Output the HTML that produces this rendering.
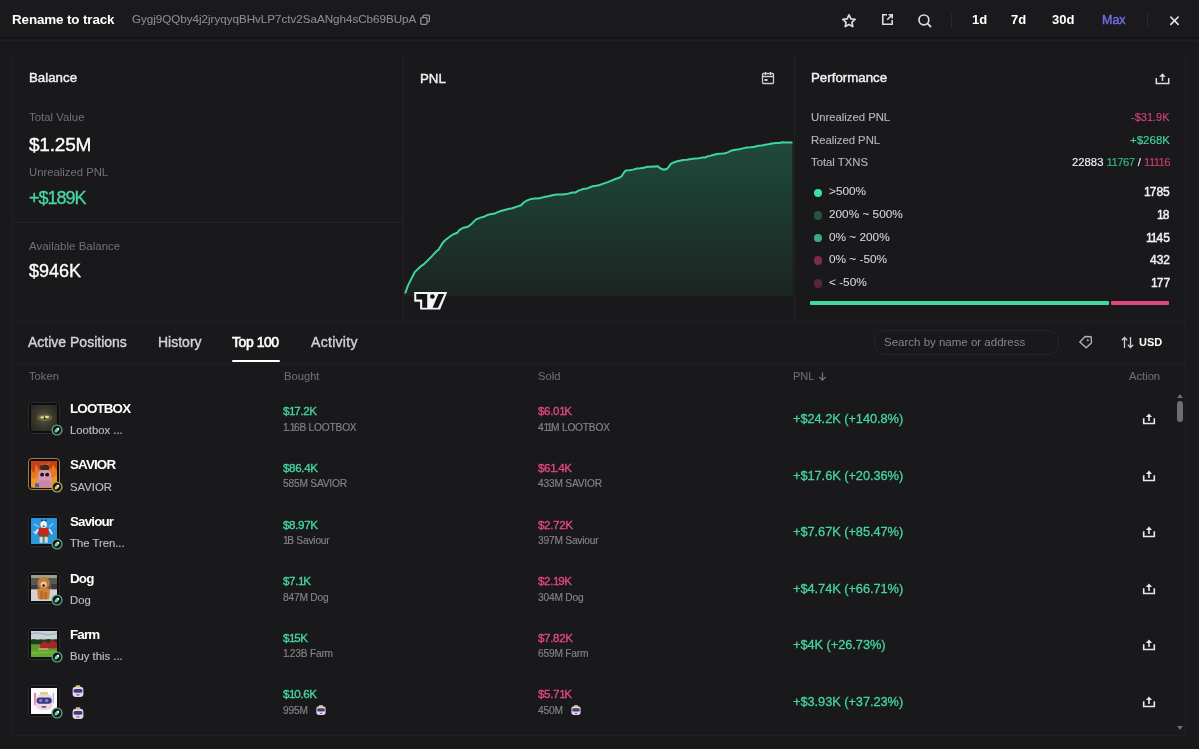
<!DOCTYPE html>
<html><head><meta charset="utf-8">
<style>
*{margin:0;padding:0;box-sizing:border-box}
html,body{width:1199px;height:749px;overflow:hidden;background:#19191b;font-family:"Liberation Sans",sans-serif;color:#fff}
.a{position:absolute}
.t{position:absolute;line-height:1;white-space:nowrap;will-change:transform}
</style></head><body>
<div class="a" style="left:0px;top:0px;width:1199px;height:37px;background:#1a1a1c"></div>
<div class="a" style="left:0px;top:37px;width:1199px;height:2px;background:#141416"></div>
<div class="a" style="left:0px;top:40px;width:1199px;height:1px;background:#1f1f22"></div>
<div id="h_title" class="t" style="left:12.3px;top:12.86px;font-size:13.4px;color:#fff;font-weight:bold;letter-spacing:-0.12px;">Rename to track</div>
<div id="h_addr" class="t" style="left:132px;top:13.28px;font-size:11.6px;color:#8b8b90;font-weight:normal;-webkit-text-stroke:0.1px #8b8b90;">Gygj9QQby4j2jryqyqBHvLP7ctv2SaANgh4sCb69BUpA</div>
<svg class="a" style="left:419px;top:13px" width="12" height="13" viewBox="0 0 12 13"><rect x="4.2" y="2.2" width="6.2" height="6.6" rx="1.3" fill="none" stroke="#909095" stroke-width="1.3"/><rect x="1.8" y="4.6" width="6.2" height="6.8" rx="1.3" fill="#19191b" stroke="#909095" stroke-width="1.3"/></svg>
<svg class="a" style="left:841px;top:12.6px" width="16" height="16" viewBox="0 0 16 16"><path d="M8 1.9l1.85 3.95 4.25.55-3.15 2.9.85 4.25L8 11.45l-3.8 2.15.85-4.25L1.9 6.4l4.25-.55z" fill="none" stroke="#dcdce0" stroke-width="1.7" stroke-linejoin="round"/></svg>
<svg class="a" style="left:881px;top:13px" width="13" height="13" viewBox="0 0 13 13"><path d="M6 1.8H1.8v9.4h9.4V7" fill="none" stroke="#dcdce0" stroke-width="1.6"/><path d="M7.6 1.8h3.6v3.6M11.2 1.8L6.2 6.8" fill="none" stroke="#dcdce0" stroke-width="1.6"/></svg>
<svg class="a" style="left:917px;top:13px" width="16" height="16" viewBox="0 0 16 16"><circle cx="6.9" cy="6.9" r="4.9" fill="none" stroke="#dcdce0" stroke-width="1.7"/><path d="M10.6 10.6l3 3" stroke="#dcdce0" stroke-width="1.8" stroke-linecap="round"/></svg>
<div class="a" style="left:951px;top:14px;width:1px;height:14px;background:#2a2a2d"></div>
<div class="t" style="left:972px;top:12.50px;font-size:13px;color:#fff;font-weight:bold;">1d</div>
<div class="t" style="left:1011px;top:12.50px;font-size:13px;color:#fff;font-weight:bold;">7d</div>
<div class="t" style="left:1052px;top:12.50px;font-size:13px;color:#fff;font-weight:bold;">30d</div>
<div class="t" style="left:1102.3px;top:14.22px;font-size:12.5px;color:#6e6ee6;font-weight:normal;-webkit-text-stroke:0.45px #6e6ee6;">Max</div>
<div class="a" style="left:1147px;top:13px;width:1px;height:15px;background:#2a2a2d"></div>
<svg class="a" style="left:1169px;top:15px" width="11" height="11" viewBox="0 0 11 11"><path d="M1.8 2l7.4 7.4M9.2 2L1.8 9.4" stroke="#e6e6e9" stroke-width="1.6" stroke-linecap="round"/></svg>
<div class="a" style="left:12px;top:54px;width:1174px;height:268px;border:1px solid #202023;border-top-color:#1c1c1e"></div>
<div class="a" style="left:403px;top:55px;width:1px;height:266px;background:#232326"></div>
<div class="a" style="left:794px;top:55px;width:1px;height:266px;background:#232326"></div>
<div class="a" style="left:13px;top:222px;width:390px;height:1px;background:#232326"></div>
<div id="bal" class="t" style="left:29px;top:71.24px;font-size:13.3px;color:#f2f2f4;font-weight:normal;-webkit-text-stroke:0.4px #f2f2f4;">Balance</div>
<div class="t" style="left:29px;top:112.35px;font-size:11.4px;color:#717176;font-weight:normal;">Total Value</div>
<div id="tv" class="t" style="left:28.5px;top:134.92px;font-size:19px;color:#fff;font-weight:normal;-webkit-text-stroke:0.35px #fff;letter-spacing:-0.2px;">$1.25M</div>
<div class="t" style="left:29px;top:166.93px;font-size:11.3px;color:#717176;font-weight:normal;">Unrealized PNL</div>
<div class="t" style="left:28.5px;top:188.76px;font-size:18px;color:#45d5a0;font-weight:normal;-webkit-text-stroke:0.35px #45d5a0;letter-spacing:-1.0px;">+$189K</div>
<div class="t" style="left:29px;top:240.77px;font-size:11.5px;color:#717176;font-weight:normal;">Available Balance</div>
<div class="t" style="left:29px;top:262.26px;font-size:18px;color:#fff;font-weight:normal;-webkit-text-stroke:0.35px #fff;">$946K</div>
<div class="t" style="left:420px;top:71.74px;font-size:13.3px;color:#f2f2f4;font-weight:normal;-webkit-text-stroke:0.4px #f2f2f4;">PNL</div>
<svg class="a" style="left:761px;top:71px" width="14" height="14" viewBox="0 0 14 14"><rect x="1.5" y="2.5" width="11" height="10" rx="1" fill="none" stroke="#cfcfd3" stroke-width="1.3"/><path d="M1.5 5.5h11M4.5 1v3M9.5 1v3" stroke="#cfcfd3" stroke-width="1.3"/><rect x="3.5" y="8" width="3" height="2" fill="#cfcfd3"/></svg>
<svg class="a" style="left:0;top:0" width="1199" height="749" viewBox="0 0 1199 749">
<defs><linearGradient id="gf" x1="0" y1="142" x2="0" y2="296" gradientUnits="userSpaceOnUse"><stop offset="0" stop-color="#1f4a3b"/><stop offset="1" stop-color="#1b2521"/></linearGradient></defs>
<path d="M404,296 L405.1,293.5 L408.0,285.4 L411.35,278.88 L414.7,272.1 L417.4,269.4 L420.7,266.35 L424.0,264.1 L426.7,261.4 L432.0,256.1 L435.35,252.31 L438.7,249.4 L442.7,242.7 L445.4,240.0 L450.7,236.0 L454.05,233.98 L457.4,232.7 L458.7,230.7 L462.7,228.0 L468.0,226.7 L472.0,223.4 L476.1,219.4 L481.4,217.4 L484.75,216.42 L488.1,214.7 L491.55,214.04 L495.0,213.4 L498.25,211.88 L501.5,210.78 L504.75,209.92 L508.0,209.0 L511.25,208.45 L514.5,207.53 L517.75,206.38 L521.0,205.2 L523.7,202.5 L527.25,200.43 L530.8,199.1 L534.05,198.62 L537.3,198.42 L540.55,198.05 L543.8,197.1 L547.06,196.6 L550.32,195.75 L553.58,195.04 L556.84,194.56 L560.1,194.4 L563.14,194.38 L566.18,194.1 L569.22,193.35 L572.26,192.57 L575.3,192.6 L578.5,190.6 L582.85,189.07 L587.2,188.4 L592.6,186.3 L596.23,185.81 L599.87,184.93 L603.5,183.6 L607.8,182.09 L612.1,180.3 L615.27,179.05 L618.43,178.03 L621.6,176.3 L623.8,172.8 L625.5,170.6 L629.3,170.35 L633.1,169.63 L636.9,168.5 L640.4,168.35 L643.9,167.74 L647.4,166.7 L650.9,166.85 L654.4,166.59 L657.9,166.3 L660.5,168.5 L664.0,169.8 L667.5,168.5 L671.0,163.6 L676.3,161.5 L679.8,160.71 L683.3,159.98 L686.8,159.7 L691.2,159.09 L695.6,158.4 L698.8,158.29 L702.0,157.62 L705.2,157.5 L707.8,156.2 L710.0,155.9 L713.07,155.07 L716.13,154.18 L719.2,153.76 L722.27,153.59 L725.33,153.18 L728.4,152.1 L731.7,150.4 L735.45,149.76 L739.2,149.2 L742.95,148.39 L746.7,147.5 L750.6,147.16 L754.5,146.71 L758.4,145.8 L761.73,145.52 L765.07,144.73 L768.4,144.2 L772.0,143.45 L775.6,142.97 L779.2,142.9 L782.53,142.36 L785.85,142.39 L789.17,142.54 L792.5,142.5 L793,296 Z" fill="url(#gf)"/>
<path d="M405.1,293.5 L408.0,285.4 L411.35,278.88 L414.7,272.1 L417.4,269.4 L420.7,266.35 L424.0,264.1 L426.7,261.4 L432.0,256.1 L435.35,252.31 L438.7,249.4 L442.7,242.7 L445.4,240.0 L450.7,236.0 L454.05,233.98 L457.4,232.7 L458.7,230.7 L462.7,228.0 L468.0,226.7 L472.0,223.4 L476.1,219.4 L481.4,217.4 L484.75,216.42 L488.1,214.7 L491.55,214.04 L495.0,213.4 L498.25,211.88 L501.5,210.78 L504.75,209.92 L508.0,209.0 L511.25,208.45 L514.5,207.53 L517.75,206.38 L521.0,205.2 L523.7,202.5 L527.25,200.43 L530.8,199.1 L534.05,198.62 L537.3,198.42 L540.55,198.05 L543.8,197.1 L547.06,196.6 L550.32,195.75 L553.58,195.04 L556.84,194.56 L560.1,194.4 L563.14,194.38 L566.18,194.1 L569.22,193.35 L572.26,192.57 L575.3,192.6 L578.5,190.6 L582.85,189.07 L587.2,188.4 L592.6,186.3 L596.23,185.81 L599.87,184.93 L603.5,183.6 L607.8,182.09 L612.1,180.3 L615.27,179.05 L618.43,178.03 L621.6,176.3 L623.8,172.8 L625.5,170.6 L629.3,170.35 L633.1,169.63 L636.9,168.5 L640.4,168.35 L643.9,167.74 L647.4,166.7 L650.9,166.85 L654.4,166.59 L657.9,166.3 L660.5,168.5 L664.0,169.8 L667.5,168.5 L671.0,163.6 L676.3,161.5 L679.8,160.71 L683.3,159.98 L686.8,159.7 L691.2,159.09 L695.6,158.4 L698.8,158.29 L702.0,157.62 L705.2,157.5 L707.8,156.2 L710.0,155.9 L713.07,155.07 L716.13,154.18 L719.2,153.76 L722.27,153.59 L725.33,153.18 L728.4,152.1 L731.7,150.4 L735.45,149.76 L739.2,149.2 L742.95,148.39 L746.7,147.5 L750.6,147.16 L754.5,146.71 L758.4,145.8 L761.73,145.52 L765.07,144.73 L768.4,144.2 L772.0,143.45 L775.6,142.97 L779.2,142.9 L782.53,142.36 L785.85,142.39 L789.17,142.54 L792.5,142.5" fill="none" stroke="#3fd69c" stroke-width="2" stroke-linejoin="round"/>
<path d="M414.25,292.1 L447.2,292.1 L440.1,309.6 L420.1,309.6 L420.1,301.7 L414.25,301.7 Z" fill="#f4f4f6"/>
<path d="M416.3,294 L427.2,294 L427.2,307.7 L422.2,307.7 L422.2,299.4 L416.3,299.4 Z" fill="#131315"/>
<circle cx="432.4" cy="296.5" r="2.3" fill="#131315"/>
<path d="M438.4,294 L444.25,294 L438,307.7 L432.6,307.7 Z" fill="#131315"/>
</svg>
<div class="t" style="left:811px;top:71.24px;font-size:13.3px;color:#f2f2f4;font-weight:normal;-webkit-text-stroke:0.4px #f2f2f4;">Performance</div>
<svg class="a" style="left:1154.5px;top:72.5px" width="15" height="12" viewBox="0 0 15 12"><path d="M1.3 5v5.5h12.4V5" fill="none" stroke="#dcdce0" stroke-width="1.5"/><path d="M4.2 3.8L7.5 0.3l3.3 3.5z" fill="#dcdce0"/><rect x="6.75" y="3" width="1.5" height="5" fill="#dcdce0"/></svg>
<div class="t" style="left:811px;top:112.43px;font-size:11.3px;color:#b3b3b8;font-weight:normal;-webkit-text-stroke:0.15px #b3b3b8;">Unrealized PNL</div>
<div class="t" style="right:29px;top:112.19px;font-size:11px;color:#d8467a;font-weight:normal;-webkit-text-stroke:0.1px #d8467a;">-$31.9K</div>
<div class="t" style="left:811px;top:134.93px;font-size:11.3px;color:#b3b3b8;font-weight:normal;-webkit-text-stroke:0.15px #b3b3b8;">Realized PNL</div>
<div class="t" style="right:29px;top:134.77px;font-size:11.5px;color:#45d5a0;font-weight:normal;-webkit-text-stroke:0.15px #45d5a0;">+$268K</div>
<div class="t" style="left:811px;top:157.43px;font-size:11.3px;color:#b3b3b8;font-weight:normal;-webkit-text-stroke:0.15px #b3b3b8;">Total TXNS</div>
<div class="t" style="right:29px;top:156.93px;font-size:11.3px;color:#f0f0f2;font-weight:normal;-webkit-text-stroke:0.15px #f0f0f2;">22883 <span style="color:#37b886;-webkit-text-stroke:0.15px #37b886;letter-spacing:-0.5px">11767</span> / <span style="color:#c23f6c;-webkit-text-stroke:0.15px #c23f6c;letter-spacing:-0.6px">11116</span></div>
<div class="a" style="left:813.5px;top:188.5px;width:8.6px;height:8.6px;background:#3ee0a4;border-radius:50%"></div>
<div class="t" style="left:829px;top:186.31px;font-size:11.8px;color:#d4d4d8;font-weight:normal;-webkit-text-stroke:0.1px #d4d4d8;">&gt;500%</div>
<div class="t" style="right:29.200000000000045px;top:186.34px;font-size:12px;color:#f2f2f4;font-weight:normal;-webkit-text-stroke:0.45px #f2f2f4;"><span style="letter-spacing:-0.08em">1</span>785</div>
<div class="a" style="left:813.5px;top:211.2px;width:8.6px;height:8.6px;background:#275443;border-radius:50%"></div>
<div class="t" style="left:829px;top:209.01px;font-size:11.8px;color:#d4d4d8;font-weight:normal;-webkit-text-stroke:0.1px #d4d4d8;">200% ~ 500%</div>
<div class="t" style="right:29.200000000000045px;top:209.04px;font-size:12px;color:#f2f2f4;font-weight:normal;-webkit-text-stroke:0.45px #f2f2f4;"><span style="letter-spacing:-0.08em">1</span>8</div>
<div class="a" style="left:813.5px;top:233.8px;width:8.6px;height:8.6px;background:#36ad84;border-radius:50%"></div>
<div class="t" style="left:829px;top:231.61px;font-size:11.8px;color:#d4d4d8;font-weight:normal;-webkit-text-stroke:0.1px #d4d4d8;">0% ~ 200%</div>
<div class="t" style="right:29.200000000000045px;top:231.64px;font-size:12px;color:#f2f2f4;font-weight:normal;-webkit-text-stroke:0.45px #f2f2f4;"><span style="letter-spacing:-0.08em">1</span><span style="letter-spacing:-0.08em">1</span>45</div>
<div class="a" style="left:813.5px;top:256.4px;width:8.6px;height:8.6px;background:#7a2d4b;border-radius:50%"></div>
<div class="t" style="left:829px;top:254.31px;font-size:11.8px;color:#d4d4d8;font-weight:normal;-webkit-text-stroke:0.1px #d4d4d8;">0% ~ -50%</div>
<div class="t" style="right:29.200000000000045px;top:254.24px;font-size:12px;color:#f2f2f4;font-weight:normal;-webkit-text-stroke:0.45px #f2f2f4;">432</div>
<div class="a" style="left:813.5px;top:279.1px;width:8.6px;height:8.6px;background:#552739;border-radius:50%"></div>
<div class="t" style="left:829px;top:276.91px;font-size:11.8px;color:#d4d4d8;font-weight:normal;-webkit-text-stroke:0.1px #d4d4d8;">&lt; -50%</div>
<div class="t" style="right:29.200000000000045px;top:276.94px;font-size:12px;color:#f2f2f4;font-weight:normal;-webkit-text-stroke:0.45px #f2f2f4;"><span style="letter-spacing:-0.08em">1</span>77</div>
<div class="a" style="left:810px;top:301px;width:298.5px;height:4px;background:#3ddc9e;border-radius:1px"></div>
<div class="a" style="left:1111.2px;top:301px;width:58.3px;height:4px;background:#e0457b;border-radius:1px"></div>
<div class="a" style="left:12px;top:321px;width:1174px;height:415px;border:1px solid #202023;border-top:none"></div>
<div class="a" style="left:13px;top:363px;width:1172px;height:1px;background:#202023"></div>
<div class="t" style="left:28.3px;top:335.15px;font-size:14px;color:#d2d2d6;font-weight:normal;-webkit-text-stroke:0.4px #d2d2d6;">Active Positions</div>
<div class="t" style="left:157.8px;top:335.15px;font-size:14px;color:#d2d2d6;font-weight:normal;-webkit-text-stroke:0.4px #d2d2d6;">History</div>
<div class="t" style="left:231.8px;top:335.15px;font-size:14px;color:#fff;font-weight:normal;-webkit-text-stroke:0.6px #fff;letter-spacing:-0.45px;">Top 100</div>
<div class="t" style="left:310.5px;top:335.15px;font-size:14px;color:#d2d2d6;font-weight:normal;-webkit-text-stroke:0.4px #d2d2d6;letter-spacing:0.3px;">Activity</div>
<div class="a" style="left:232px;top:360px;width:48px;height:2px;background:#fff;border-radius:1px"></div>
<div class="a" style="left:874px;top:330px;width:185px;height:25px;border:1px solid #252528;border-radius:10px;background:#19191b"></div>
<div class="t" style="left:884px;top:336.77px;font-size:11.5px;color:#85858a;font-weight:normal;">Search by name or address</div>
<svg class="a" style="left:1078px;top:335px" width="15" height="15" viewBox="0 0 15 15"><path d="M1.8 6.9L7.2 1.5l5.9.3.4 5.9L8.2 12.8z" fill="none" stroke="#b0b0b5" stroke-width="1.4" stroke-linejoin="round"/><circle cx="9.8" cy="5.2" r="1.05" fill="#b0b0b5"/></svg>
<svg class="a" style="left:1120px;top:335px" width="15" height="15" viewBox="0 0 15 15"><path d="M4.5 13V2.5M1.8 5.2L4.5 2.5 7.2 5.2M10.5 2v10.5M7.8 9.8l2.7 2.7 2.7-2.7" fill="none" stroke="#cfcfd3" stroke-width="1.3"/></svg>
<div class="t" style="left:1139px;top:337.19px;font-size:11px;color:#fff;font-weight:bold;">USD</div>
<div class="t" style="left:28.5px;top:371.02px;font-size:11.2px;color:#6e6e73;font-weight:normal;-webkit-text-stroke:0.1px #6e6e73;">Token</div>
<div class="t" style="left:283.7px;top:371.02px;font-size:11.2px;color:#6e6e73;font-weight:normal;-webkit-text-stroke:0.1px #6e6e73;">Bought</div>
<div class="t" style="left:538px;top:371.02px;font-size:11.2px;color:#6e6e73;font-weight:normal;-webkit-text-stroke:0.1px #6e6e73;">Sold</div>
<div class="t" style="left:793px;top:371.19px;font-size:11px;color:#6e6e73;font-weight:normal;-webkit-text-stroke:0.1px #6e6e73;">PNL</div>
<svg class="a" style="left:817.5px;top:372px" width="9" height="9" viewBox="0 0 9 9"><path d="M4.5 0.6v7.4M1.2 4.8l3.3 3.3 3.3-3.3" fill="none" stroke="#77777c" stroke-width="1.2"/></svg>
<div class="t" style="right:39px;top:371.02px;font-size:11.2px;color:#6e6e73;font-weight:normal;-webkit-text-stroke:0.1px #6e6e73;">Action</div>
<div class="a" style="left:28.3px;top:401.7px;width:31.5px;height:32px;border:1.5px solid #2b2b2f;border-radius:4px;background:#0e0e10"></div>
<svg class="a" style="left:31px;top:404.7px;filter:blur(0.35px)" width="26.3" height="26.3" viewBox="0 0 26 26"><defs><radialGradient id="lg" cx="50%" cy="48%" r="60%"><stop offset="0" stop-color="#5e5b40"/><stop offset="0.55" stop-color="#3b392c"/><stop offset="1" stop-color="#2a2a25"/></radialGradient></defs><rect width="26" height="26" fill="url(#lg)"/><ellipse cx="13.5" cy="12.5" rx="7.5" ry="3.2" fill="#6f6a48" opacity="0.8"/><ellipse cx="11.2" cy="12.2" rx="2" ry="1.2" fill="#e4dc90"/><ellipse cx="15.8" cy="11.8" rx="2" ry="1.2" fill="#e4dc90"/><circle cx="13.4" cy="13" r="0.8" fill="#1a1a12"/></svg>
<svg class="a" style="left:50.5px;top:424.3px" width="12" height="12" viewBox="0 0 12 12"><circle cx="6" cy="6" r="4.9" fill="#0b1410" stroke="#5a9c84" stroke-width="1.4"/><path d="M5 7l2-2" stroke="#f0f6f2" stroke-width="2.6" stroke-linecap="round"/><path d="M4.9 7.1l1-1" stroke="#6cc8a4" stroke-width="2.6" stroke-linecap="round"/></svg>
<div class="t" style="left:70px;top:401.86px;font-size:13.4px;color:#fff;font-weight:bold;letter-spacing:-0.85px;">LOOTBOX</div>
<div class="t" style="left:70px;top:424.93px;font-size:11.3px;color:#bdbdc2;font-weight:normal;-webkit-text-stroke:0.15px #bdbdc2;">Lootbox ...</div>
<div class="t" style="left:283px;top:405.48px;font-size:11.6px;color:#45d5a0;font-weight:normal;-webkit-text-stroke:0.35px #45d5a0;letter-spacing:-0.35px;">$<span style="letter-spacing:-0.12em">1</span>7.2K</div>
<div class="t" style="left:537.5px;top:405.48px;font-size:11.6px;color:#e0497d;font-weight:normal;-webkit-text-stroke:0.35px #e0497d;letter-spacing:-0.35px;">$6.0<span style="letter-spacing:-0.12em">1</span>K</div>
<div class="t" style="left:283px;top:422.87px;font-size:10.2px;color:#838388;font-weight:normal;-webkit-text-stroke:0.15px #838388;letter-spacing:-0.2px;"><span style="letter-spacing:-0.15em">1</span>.<span style="letter-spacing:-0.15em">1</span>6B LOOTBOX</div>
<div class="t" style="left:537.5px;top:422.87px;font-size:10.2px;color:#838388;font-weight:normal;-webkit-text-stroke:0.15px #838388;letter-spacing:-0.2px;">4<span style="letter-spacing:-0.15em">1</span><span style="letter-spacing:-0.15em">1</span>M LOOTBOX</div>
<div class="t" style="left:792.7px;top:412.96px;font-size:12.8px;color:#45d5a0;font-weight:normal;-webkit-text-stroke:0.3px #45d5a0;letter-spacing:-0.05px;">+$24.2K&nbsp;(+140.8%)</div>
<svg class="a" style="left:1142px;top:413.0px" width="14" height="13" viewBox="0 0 14 13"><path d="M1.7 5.2v5.3h10.6V5.2" fill="none" stroke="#e8e8eb" stroke-width="1.6"/><path d="M3.9 3.9L7 0.4l3.1 3.5z" fill="#e8e8eb"/><rect x="6.2" y="3.2" width="1.6" height="4.8" fill="#e8e8eb"/></svg>
<div class="a" style="left:28.3px;top:458.3px;width:31.5px;height:32px;border:1.5px solid #9c8238;border-radius:4px;background:#0e0e10"></div>
<svg class="a" style="left:31px;top:461.3px;filter:blur(0.35px)" width="26.3" height="26.3" viewBox="0 0 26 26"><rect width="26" height="26" fill="#c8401a"/><path d="M0 26V8l3 4 2-9 3 7 3-8 3 6 3-7 2 8 3-5 4 6v22z" fill="#e8781e"/><path d="M0 26V15l3 3 2-4 2 4 3-3v11zM19 26V14l3 3 4-4v13z" fill="#f0a030" opacity="0.7"/><rect x="9" y="4" width="9" height="5" rx="1.5" fill="#3a2a20"/><path d="M7 26V13q0-4 6.5-4t6.5 4v13z" fill="#d996b4"/><circle cx="11" cy="13.5" r="1.9" fill="#1a1218"/><circle cx="16" cy="13.5" r="1.9" fill="#1a1218"/><path d="M8 19h11v7H8z" fill="#c487a8"/><path d="M4 22h4v4H4z" fill="#3a6ab0"/></svg>
<svg class="a" style="left:50.5px;top:480.9px" width="12" height="12" viewBox="0 0 12 12"><circle cx="6" cy="6" r="4.9" fill="#0b1410" stroke="#b09a50" stroke-width="1.4"/><path d="M5 7l2-2" stroke="#f0f6f2" stroke-width="2.6" stroke-linecap="round"/><path d="M4.9 7.1l1-1" stroke="#d8c060" stroke-width="2.6" stroke-linecap="round"/></svg>
<div class="t" style="left:70px;top:458.46px;font-size:13.4px;color:#fff;font-weight:bold;letter-spacing:-0.85px;">SAVIOR</div>
<div class="t" style="left:70px;top:481.53px;font-size:11.3px;color:#bdbdc2;font-weight:normal;-webkit-text-stroke:0.15px #bdbdc2;">SAVIOR</div>
<div class="t" style="left:283px;top:462.08px;font-size:11.6px;color:#45d5a0;font-weight:normal;-webkit-text-stroke:0.35px #45d5a0;letter-spacing:-0.35px;">$86.4K</div>
<div class="t" style="left:537.5px;top:462.08px;font-size:11.6px;color:#e0497d;font-weight:normal;-webkit-text-stroke:0.35px #e0497d;letter-spacing:-0.35px;">$6<span style="letter-spacing:-0.12em">1</span>.4K</div>
<div class="t" style="left:283px;top:479.47px;font-size:10.2px;color:#838388;font-weight:normal;-webkit-text-stroke:0.15px #838388;letter-spacing:-0.2px;">585M SAVIOR</div>
<div class="t" style="left:537.5px;top:479.47px;font-size:10.2px;color:#838388;font-weight:normal;-webkit-text-stroke:0.15px #838388;letter-spacing:-0.2px;">433M SAVIOR</div>
<div class="t" style="left:792.7px;top:469.56px;font-size:12.8px;color:#45d5a0;font-weight:normal;-webkit-text-stroke:0.3px #45d5a0;letter-spacing:-0.05px;">+$17.6K&nbsp;(+20.36%)</div>
<svg class="a" style="left:1142px;top:469.6px" width="14" height="13" viewBox="0 0 14 13"><path d="M1.7 5.2v5.3h10.6V5.2" fill="none" stroke="#e8e8eb" stroke-width="1.6"/><path d="M3.9 3.9L7 0.4l3.1 3.5z" fill="#e8e8eb"/><rect x="6.2" y="3.2" width="1.6" height="4.8" fill="#e8e8eb"/></svg>
<div class="a" style="left:28.3px;top:514.9px;width:31.5px;height:32px;border:1.5px solid #2b2b2f;border-radius:4px;background:#0e0e10"></div>
<svg class="a" style="left:31px;top:517.9px;filter:blur(0.35px)" width="26.3" height="26.3" viewBox="0 0 26 26"><rect width="26" height="26" fill="#2b96da"/><path d="M3 6l5 3M22 5l-4 4M2 14l5-1" stroke="#8fd0f5" stroke-width="1.2"/><ellipse cx="12.5" cy="6.5" rx="3.2" ry="3.5" fill="#f2f2f2"/><path d="M10 3l1-2 1 2M13.5 3l1-2 1 2" fill="#222"/><circle cx="12.5" cy="8.2" r="1" fill="#c02828"/><path d="M8 10h9l1 7H7z" fill="#c8261e"/><path d="M7 11l-3 5M18 11l3 5" stroke="#f2f2f2" stroke-width="1.6"/><rect x="8" y="17" width="9" height="1.5" fill="#6a4a1a"/><path d="M8.5 18.5h3v6h-3zM13.5 18.5h3v6h-3z" fill="#e8d6b0"/></svg>
<svg class="a" style="left:50.5px;top:537.5px" width="12" height="12" viewBox="0 0 12 12"><circle cx="6" cy="6" r="4.9" fill="#0b1410" stroke="#5a9c84" stroke-width="1.4"/><path d="M5 7l2-2" stroke="#f0f6f2" stroke-width="2.6" stroke-linecap="round"/><path d="M4.9 7.1l1-1" stroke="#6cc8a4" stroke-width="2.6" stroke-linecap="round"/></svg>
<div class="t" style="left:70px;top:515.06px;font-size:13.4px;color:#fff;font-weight:bold;letter-spacing:-0.85px;">Saviour</div>
<div class="t" style="left:70px;top:538.13px;font-size:11.3px;color:#bdbdc2;font-weight:normal;-webkit-text-stroke:0.15px #bdbdc2;">The Tren...</div>
<div class="t" style="left:283px;top:518.68px;font-size:11.6px;color:#45d5a0;font-weight:normal;-webkit-text-stroke:0.35px #45d5a0;letter-spacing:-0.35px;">$8.97K</div>
<div class="t" style="left:537.5px;top:518.68px;font-size:11.6px;color:#e0497d;font-weight:normal;-webkit-text-stroke:0.35px #e0497d;letter-spacing:-0.35px;">$2.72K</div>
<div class="t" style="left:283px;top:536.07px;font-size:10.2px;color:#838388;font-weight:normal;-webkit-text-stroke:0.15px #838388;letter-spacing:-0.2px;"><span style="letter-spacing:-0.15em">1</span>B Saviour</div>
<div class="t" style="left:537.5px;top:536.07px;font-size:10.2px;color:#838388;font-weight:normal;-webkit-text-stroke:0.15px #838388;letter-spacing:-0.2px;">397M Saviour</div>
<div class="t" style="left:792.7px;top:526.16px;font-size:12.8px;color:#45d5a0;font-weight:normal;-webkit-text-stroke:0.3px #45d5a0;letter-spacing:-0.05px;">+$7.67K&nbsp;(+85.47%)</div>
<svg class="a" style="left:1142px;top:526.2px" width="14" height="13" viewBox="0 0 14 13"><path d="M1.7 5.2v5.3h10.6V5.2" fill="none" stroke="#e8e8eb" stroke-width="1.6"/><path d="M3.9 3.9L7 0.4l3.1 3.5z" fill="#e8e8eb"/><rect x="6.2" y="3.2" width="1.6" height="4.8" fill="#e8e8eb"/></svg>
<div class="a" style="left:28.3px;top:571.5px;width:31.5px;height:32px;border:1.5px solid #2b2b2f;border-radius:4px;background:#0e0e10"></div>
<svg class="a" style="left:31px;top:574.5px;filter:blur(0.35px)" width="26.3" height="26.3" viewBox="0 0 26 26"><rect width="26" height="26" fill="#5a5854"/><rect y="0" width="26" height="3" fill="#9aa08a"/><rect y="14" width="26" height="12" fill="#d6d0d4"/><path d="M0 10h6v4H0zM20 9h6v5h-6z" fill="#3e3a38"/><ellipse cx="12.5" cy="8" rx="6" ry="6" fill="#c77a34"/><ellipse cx="12.5" cy="9.5" rx="3" ry="3" fill="#e8c8b0"/><circle cx="12.5" cy="10.5" r="1.3" fill="#231810"/><path d="M6 14q6.5-3 13 0l-1 10H7z" fill="#d0843a"/><path d="M9 16h3v8H9zM13 17h3v7h-3z" fill="#b86a28"/></svg>
<svg class="a" style="left:50.5px;top:594.1px" width="12" height="12" viewBox="0 0 12 12"><circle cx="6" cy="6" r="4.9" fill="#0b1410" stroke="#5a9c84" stroke-width="1.4"/><path d="M5 7l2-2" stroke="#f0f6f2" stroke-width="2.6" stroke-linecap="round"/><path d="M4.9 7.1l1-1" stroke="#6cc8a4" stroke-width="2.6" stroke-linecap="round"/></svg>
<div class="t" style="left:70px;top:571.66px;font-size:13.4px;color:#fff;font-weight:bold;letter-spacing:-0.85px;">Dog</div>
<div class="t" style="left:70px;top:594.73px;font-size:11.3px;color:#bdbdc2;font-weight:normal;-webkit-text-stroke:0.15px #bdbdc2;">Dog</div>
<div class="t" style="left:283px;top:575.28px;font-size:11.6px;color:#45d5a0;font-weight:normal;-webkit-text-stroke:0.35px #45d5a0;letter-spacing:-0.35px;">$7.<span style="letter-spacing:-0.12em">1</span>K</div>
<div class="t" style="left:537.5px;top:575.28px;font-size:11.6px;color:#e0497d;font-weight:normal;-webkit-text-stroke:0.35px #e0497d;letter-spacing:-0.35px;">$2.<span style="letter-spacing:-0.12em">1</span>9K</div>
<div class="t" style="left:283px;top:592.67px;font-size:10.2px;color:#838388;font-weight:normal;-webkit-text-stroke:0.15px #838388;letter-spacing:-0.2px;">847M Dog</div>
<div class="t" style="left:537.5px;top:592.67px;font-size:10.2px;color:#838388;font-weight:normal;-webkit-text-stroke:0.15px #838388;letter-spacing:-0.2px;">304M Dog</div>
<div class="t" style="left:792.7px;top:582.76px;font-size:12.8px;color:#45d5a0;font-weight:normal;-webkit-text-stroke:0.3px #45d5a0;letter-spacing:-0.05px;">+$4.74K&nbsp;(+66.71%)</div>
<svg class="a" style="left:1142px;top:582.8px" width="14" height="13" viewBox="0 0 14 13"><path d="M1.7 5.2v5.3h10.6V5.2" fill="none" stroke="#e8e8eb" stroke-width="1.6"/><path d="M3.9 3.9L7 0.4l3.1 3.5z" fill="#e8e8eb"/><rect x="6.2" y="3.2" width="1.6" height="4.8" fill="#e8e8eb"/></svg>
<div class="a" style="left:28.3px;top:628.1px;width:31.5px;height:32px;border:1.5px solid #2b2b2f;border-radius:4px;background:#0e0e10"></div>
<svg class="a" style="left:31px;top:631.1px;filter:blur(0.35px)" width="26.3" height="26.3" viewBox="0 0 26 26"><rect width="26" height="26" fill="#5a9a2e"/><rect width="26" height="8.5" fill="#c9d2da"/><path d="M0 3q6-2 12 0t14-1" stroke="#a8b4c0" stroke-width="1.5" fill="none"/><path d="M0 8.5h26v4H0z" fill="#2a4a1e"/><path d="M0 9l3-1 3 1.5 4-1 3 1 4-1.5 4 1 5-1v5H0z" fill="#1f3a18"/><path d="M9 17v-4l4-3 4 2 4-3 5 3v5z" fill="#a82626"/><path d="M7 17h10v2H7z" fill="#c8a070"/><rect y="19" width="26" height="7" fill="#62aa30"/><path d="M0 22l26-1.5" stroke="#7cc040" stroke-width="1"/></svg>
<svg class="a" style="left:50.5px;top:650.7px" width="12" height="12" viewBox="0 0 12 12"><circle cx="6" cy="6" r="4.9" fill="#0b1410" stroke="#5a9c84" stroke-width="1.4"/><path d="M5 7l2-2" stroke="#f0f6f2" stroke-width="2.6" stroke-linecap="round"/><path d="M4.9 7.1l1-1" stroke="#6cc8a4" stroke-width="2.6" stroke-linecap="round"/></svg>
<div class="t" style="left:70px;top:628.26px;font-size:13.4px;color:#fff;font-weight:bold;letter-spacing:-0.85px;">Farm</div>
<div class="t" style="left:70px;top:651.33px;font-size:11.3px;color:#bdbdc2;font-weight:normal;-webkit-text-stroke:0.15px #bdbdc2;">Buy this ...</div>
<div class="t" style="left:283px;top:631.88px;font-size:11.6px;color:#45d5a0;font-weight:normal;-webkit-text-stroke:0.35px #45d5a0;letter-spacing:-0.35px;">$<span style="letter-spacing:-0.12em">1</span>5K</div>
<div class="t" style="left:537.5px;top:631.88px;font-size:11.6px;color:#e0497d;font-weight:normal;-webkit-text-stroke:0.35px #e0497d;letter-spacing:-0.35px;">$7.82K</div>
<div class="t" style="left:283px;top:649.27px;font-size:10.2px;color:#838388;font-weight:normal;-webkit-text-stroke:0.15px #838388;letter-spacing:-0.2px;"><span style="letter-spacing:-0.15em">1</span>.23B Farm</div>
<div class="t" style="left:537.5px;top:649.27px;font-size:10.2px;color:#838388;font-weight:normal;-webkit-text-stroke:0.15px #838388;letter-spacing:-0.2px;">659M Farm</div>
<div class="t" style="left:792.7px;top:639.36px;font-size:12.8px;color:#45d5a0;font-weight:normal;-webkit-text-stroke:0.3px #45d5a0;letter-spacing:-0.05px;">+$4K&nbsp;(+26.73%)</div>
<svg class="a" style="left:1142px;top:639.4px" width="14" height="13" viewBox="0 0 14 13"><path d="M1.7 5.2v5.3h10.6V5.2" fill="none" stroke="#e8e8eb" stroke-width="1.6"/><path d="M3.9 3.9L7 0.4l3.1 3.5z" fill="#e8e8eb"/><rect x="6.2" y="3.2" width="1.6" height="4.8" fill="#e8e8eb"/></svg>
<div class="a" style="left:28.3px;top:684.7px;width:31.5px;height:32px;border:1.5px solid #2b2b2f;border-radius:4px;background:#0e0e10"></div>
<svg class="a" style="left:31px;top:687.7px;filter:blur(0.35px)" width="26.3" height="26.3" viewBox="0 0 26 26"><rect width="26" height="26" fill="#fbf9fb"/><path d="M4 5v12" stroke="#e05070" stroke-width="1.4"/><path d="M22 5v10" stroke="#c0b0c0" stroke-width="1.2"/><rect x="9" y="4" width="7.5" height="3.2" fill="#e0cc70"/><rect x="4.5" y="6.5" width="17" height="15" rx="5" fill="#ecd6ec"/><rect x="5.5" y="9.5" width="15" height="6" rx="3" fill="#3c3a80"/><rect x="8" y="11" width="3" height="2.8" rx="1" fill="#7f8ed0"/><rect x="14" y="11" width="3" height="2.8" rx="1" fill="#7f8ed0"/><rect x="10.5" y="18" width="4.5" height="1.4" fill="#5a3a5a"/></svg>
<svg class="a" style="left:50.5px;top:707.3px" width="12" height="12" viewBox="0 0 12 12"><circle cx="6" cy="6" r="4.9" fill="#0b1410" stroke="#5a9c84" stroke-width="1.4"/><path d="M5 7l2-2" stroke="#f0f6f2" stroke-width="2.6" stroke-linecap="round"/><path d="M4.9 7.1l1-1" stroke="#6cc8a4" stroke-width="2.6" stroke-linecap="round"/></svg>
<svg class="a" style="left:71px;top:684.2px" width="14" height="14" viewBox="0 0 13 13"><rect x="1.5" y="2.5" width="10" height="9.5" rx="3" fill="#e6d3e6"/><rect x="2.3" y="4.6" width="8.4" height="3.6" rx="1.7" fill="#3f3c80"/><rect x="4.5" y="1.2" width="4" height="2" fill="#d8c27a"/><rect x="5.2" y="9.6" width="2.6" height="1" fill="#6a4d6a"/></svg>
<svg class="a" style="left:71px;top:705.7px" width="14" height="14" viewBox="0 0 13 13"><rect x="1.5" y="2.5" width="10" height="9.5" rx="3" fill="#e6d3e6"/><rect x="2.3" y="4.6" width="8.4" height="3.6" rx="1.7" fill="#3f3c80"/><rect x="4.5" y="1.2" width="4" height="2" fill="#d8c27a"/><rect x="5.2" y="9.6" width="2.6" height="1" fill="#6a4d6a"/></svg>
<div class="t" style="left:283px;top:688.48px;font-size:11.6px;color:#45d5a0;font-weight:normal;-webkit-text-stroke:0.35px #45d5a0;letter-spacing:-0.35px;">$<span style="letter-spacing:-0.12em">1</span>0.6K</div>
<div class="t" style="left:537.5px;top:688.48px;font-size:11.6px;color:#e0497d;font-weight:normal;-webkit-text-stroke:0.35px #e0497d;letter-spacing:-0.35px;">$5.7<span style="letter-spacing:-0.12em">1</span>K</div>
<div class="t" style="left:283px;top:705.87px;font-size:10.2px;color:#838388;font-weight:normal;-webkit-text-stroke:0.15px #838388;letter-spacing:-0.2px;">995M</div>
<svg class="a" style="left:315px;top:703.7px" width="12" height="12" viewBox="0 0 13 13"><rect x="1.5" y="2.5" width="10" height="9.5" rx="3" fill="#e6d3e6"/><rect x="2.3" y="4.6" width="8.4" height="3.6" rx="1.7" fill="#3f3c80"/><rect x="4.5" y="1.2" width="4" height="2" fill="#d8c27a"/><rect x="5.2" y="9.6" width="2.6" height="1" fill="#6a4d6a"/></svg>
<div class="t" style="left:537.5px;top:705.87px;font-size:10.2px;color:#838388;font-weight:normal;-webkit-text-stroke:0.15px #838388;letter-spacing:-0.2px;">450M</div>
<svg class="a" style="left:570px;top:703.7px" width="12" height="12" viewBox="0 0 13 13"><rect x="1.5" y="2.5" width="10" height="9.5" rx="3" fill="#e6d3e6"/><rect x="2.3" y="4.6" width="8.4" height="3.6" rx="1.7" fill="#3f3c80"/><rect x="4.5" y="1.2" width="4" height="2" fill="#d8c27a"/><rect x="5.2" y="9.6" width="2.6" height="1" fill="#6a4d6a"/></svg>
<div class="t" style="left:792.7px;top:695.96px;font-size:12.8px;color:#45d5a0;font-weight:normal;-webkit-text-stroke:0.3px #45d5a0;letter-spacing:-0.05px;">+$3.93K&nbsp;(+37.23%)</div>
<svg class="a" style="left:1142px;top:696.0px" width="14" height="13" viewBox="0 0 14 13"><path d="M1.7 5.2v5.3h10.6V5.2" fill="none" stroke="#e8e8eb" stroke-width="1.6"/><path d="M3.9 3.9L7 0.4l3.1 3.5z" fill="#e8e8eb"/><rect x="6.2" y="3.2" width="1.6" height="4.8" fill="#e8e8eb"/></svg>
<div class="a" style="left:1177px;top:401px;width:6px;height:21px;background:#6d6d72;border-radius:3px"></div>
<svg class="a" style="left:1177px;top:394px" width="6" height="4" viewBox="0 0 6 4"><path d="M0 4L3 0 6 4z" fill="#6d6d72"/></svg>
<svg class="a" style="left:1177px;top:726px" width="6" height="4" viewBox="0 0 6 4"><path d="M0 0L3 4 6 0z" fill="#6d6d72"/></svg>
</body></html>
